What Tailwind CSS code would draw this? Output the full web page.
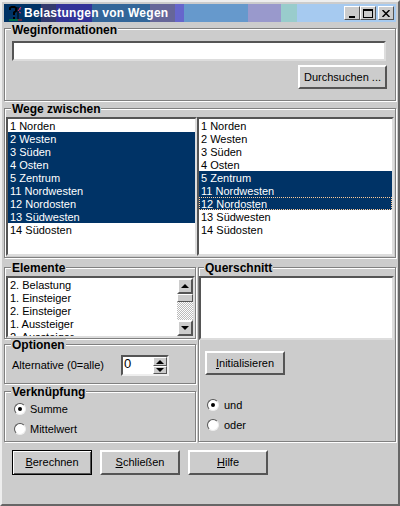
<!DOCTYPE html>
<html lang="de">
<head>
  <meta charset="UTF-8">
  <title>Belastungen von Wegen</title>
  <script src="https://cdn.jsdelivr.net/npm/@tailwindcss/browser@4"></script>
</head>
<body class="bg-[#cccccc] font-['Liberation_Sans',sans-serif] text-[11px] text-black">
  <div class="w-[400px] h-[506px] overflow-hidden bg-[#cccccc] border-2 border-t-[#eeeeee] border-l-[#eeeeee] border-r-[#666666] border-b-[#666666] p-[2px]">

    <!-- Title bar -->
    <div class="relative flex h-[18px]">
      <div class="w-[37px] bg-[#003366]"></div>
      <div class="w-[15px] bg-[#333a6e]"></div>
      <div class="w-[36px] bg-[#333399]"></div>
      <div class="w-[58px] bg-[#336699]"></div>
      <div class="w-[25px] bg-[#666699]"></div>
      <div class="w-[9px] bg-[#6666cc]"></div>
      <div class="w-[64px] bg-[#6699cc]"></div>
      <div class="w-[33px] bg-[#9999cc]"></div>
      <div class="w-[16px] bg-[#99cccc]"></div>
      <div class="flex-1 bg-[#a6caf0]"></div>
      <div class="absolute inset-0 flex items-center">
        <svg class="ml-[3px] w-[16px] h-[16px]" viewBox="0 0 16 16" fill="none">
          <path d="M3 5V3L4.5 2H7.5L9 3V6L7 7.5V10" stroke="#000" stroke-width="2"/>
          <path d="M6 12h2v2H6z" fill="#000"/>
          <path d="M11 2v12" stroke="#000"/>
          <path d="M11 6l3-4M12 4l2 0M12 7l2 1" stroke="#cc3366"/>
          <path d="M2 15h9" stroke="#00aa33"/>
          <path d="M11 15h4" stroke="#cc2222"/>
        </svg>
        <span class="ml-[1px] font-bold text-[12px] tracking-[0.25px] text-white whitespace-nowrap">Belastungen von Wegen</span>
        <div class="ml-auto flex mr-[2px]">
          <div class="w-[16px] h-[14px] bg-[#cccccc] border border-t-white border-l-white border-r-[#555555] border-b-[#555555] flex items-end justify-center pb-[1px]">
            <div class="w-[6px] h-[2px] bg-black"></div>
          </div>
          <div class="w-[16px] h-[14px] bg-[#cccccc] border border-t-white border-l-white border-r-[#555555] border-b-[#555555] flex items-center justify-center">
            <div class="w-[10px] h-[9px] border border-black border-t-2"></div>
          </div>
          <div class="ml-[2px] w-[16px] h-[14px] bg-[#cccccc] border border-t-white border-l-white border-r-[#555555] border-b-[#555555] flex items-center justify-center">
            <svg class="w-[8px] h-[7px]" viewBox="0 0 8 7"><path d="M0.5 0L7.5 7M7.5 0L0.5 7" stroke="#000" stroke-width="1.5"/></svg>
          </div>
        </div>
      </div>
    </div>

    <!-- Weginformationen -->
    <div class="relative mt-[6px] h-[73px] border border-[#808080] shadow-[inset_1px_1px_0_#fff,1px_1px_0_#fff]">
      <span class="absolute -top-[5px] left-[6px] bg-[#cccccc] px-[1px] leading-[13px] font-bold text-[12px]">Weginformationen</span>
      <div class="ml-[7px] mt-[12px] w-[374px] h-[20px] bg-white border-2 border-t-[#555555] border-l-[#555555] border-r-[#dddddd] border-b-[#dddddd]"></div>
      <div class="flex justify-end mr-[8px] mt-[4px]">
        <button class="w-[89px] h-[24px] bg-[#cccccc] border-2 border-t-white border-l-white border-r-[#555555] border-b-[#555555]">Durchsuchen ...</button>
      </div>
    </div>

    <!-- Wege zwischen -->
    <div class="relative mt-[7px] h-[150px] border border-[#808080] shadow-[inset_1px_1px_0_#fff,1px_1px_0_#fff]">
      <span class="absolute -top-[6px] left-[6px] bg-[#cccccc] px-[1px] leading-[13px] font-bold text-[12px]">Wege zwischen</span>
      <div class="flex ml-[1px] mt-[8px]">
        <ul class="w-[191px] h-[139px] bg-white border-2 border-t-[#555555] border-l-[#555555] border-r-[#dddddd] border-b-[#dddddd] leading-[14px]">
          <li class="pl-[2px] h-[13px]">1 Norden</li>
          <li class="pl-[2px] h-[13px] bg-[#003366] text-white">2 Westen</li>
          <li class="pl-[2px] h-[13px] bg-[#003366] text-white">3 Süden</li>
          <li class="pl-[2px] h-[13px] bg-[#003366] text-white">4 Osten</li>
          <li class="pl-[2px] h-[13px] bg-[#003366] text-white">5 Zentrum</li>
          <li class="pl-[2px] h-[13px] bg-[#003366] text-white">11 Nordwesten</li>
          <li class="pl-[2px] h-[13px] bg-[#003366] text-white">12 Nordosten</li>
          <li class="pl-[2px] h-[13px] bg-[#003366] text-white">13 Südwesten</li>
          <li class="pl-[2px] h-[13px]">14 Südosten</li>
        </ul>
        <ul class="w-[197px] h-[139px] bg-white border-2 border-t-[#555555] border-l-[#555555] border-r-[#dddddd] border-b-[#dddddd] leading-[14px]">
          <li class="pl-[2px] h-[13px]">1 Norden</li>
          <li class="pl-[2px] h-[13px]">2 Westen</li>
          <li class="pl-[2px] h-[13px]">3 Süden</li>
          <li class="pl-[2px] h-[13px]">4 Osten</li>
          <li class="pl-[2px] h-[13px] bg-[#003366] text-white">5 Zentrum</li>
          <li class="pl-[2px] h-[13px] bg-[#003366] text-white">11 Nordwesten</li>
          <li class="pl-[1px] h-[13px] leading-[12px] bg-[#003366] text-white border border-dotted border-[#ffcc99]">12 Nordosten</li>
          <li class="pl-[2px] h-[13px]">13 Südwesten</li>
          <li class="pl-[2px] h-[13px]">14 Südosten</li>
        </ul>
      </div>
    </div>

    <!-- Lower groups -->
    <div class="flex gap-[2px] mt-[9px]">
      <div class="w-[192px]">
        <div class="relative h-[72px] border border-[#808080] shadow-[inset_1px_1px_0_#fff,1px_1px_0_#fff]">
          <span class="absolute -top-[6px] left-[6px] bg-[#cccccc] px-[1px] leading-[13px] font-bold text-[12px]">Elemente</span>
          <div class="flex ml-[1px] mt-[8px] w-[189px] h-[62px] bg-white border-2 border-t-[#555555] border-l-[#555555] border-r-[#dddddd] border-b-[#dddddd] overflow-hidden">
            <ul class="flex-1 pl-[2px] leading-[14px]">
              <li class="h-[13px]">2. Belastung</li>
              <li class="h-[13px]">1. Einsteiger</li>
              <li class="h-[13px]">2. Einsteiger</li>
              <li class="h-[13px]">1. Aussteiger</li>
              <li class="h-[13px]">2. Aussteiger</li>
            </ul>
            <div class="w-[16px] flex flex-col">
              <div class="h-[16px] bg-[#cccccc] border-2 border-t-white border-l-white border-r-[#555555] border-b-[#555555] flex items-center justify-center">
                <div class="border-x-[4px] border-x-transparent border-b-[4px] border-b-black"></div>
              </div>
              <div class="h-[8px] bg-[#cccccc] border border-t-white border-l-white border-r-[#555555] border-b-[#555555]"></div>
              <div class="flex-1 bg-[repeating-conic-gradient(#ffffff_0_25%,#bbbbbb_0_50%)] bg-[length:2px_2px]"></div>
              <div class="h-[16px] bg-[#cccccc] border-2 border-t-white border-l-white border-r-[#555555] border-b-[#555555] flex items-center justify-center">
                <div class="border-x-[4px] border-x-transparent border-t-[4px] border-t-black"></div>
              </div>
            </div>
          </div>
        </div>

        <div class="relative mt-[5px] h-[40px] border border-[#808080] shadow-[inset_1px_1px_0_#fff,1px_1px_0_#fff]">
          <span class="absolute -top-[6px] left-[6px] bg-[#cccccc] px-[1px] leading-[13px] font-bold text-[12px]">Optionen</span>
          <div class="flex items-center pl-[7px] pt-[10px]">
            <span class="w-[109px]">Alternative (0=alle)</span>
            <div class="flex w-[48px] h-[21px] bg-white border-2 border-t-[#555555] border-l-[#555555] border-r-[#eeeeee] border-b-[#eeeeee]">
              <span class="flex-1 pl-[1px] leading-[14px] text-[13px]">0</span>
              <div class="w-[14px] flex flex-col">
                <div class="h-[9px] bg-[#cccccc] border border-t-white border-l-white border-r-[#555555] border-b-[#555555] flex items-center justify-center">
                  <div class="border-x-[4px] border-x-transparent border-b-[4px] border-b-black"></div>
                </div>
                <div class="h-[8px] bg-[#cccccc] border border-t-white border-l-white border-r-[#555555] border-b-[#555555] flex items-center justify-center">
                  <div class="border-x-[4px] border-x-transparent border-t-[4px] border-t-black"></div>
                </div>
              </div>
            </div>
          </div>
        </div>

        <div class="relative mt-[7px] h-[51px] border border-[#808080] shadow-[inset_1px_1px_0_#fff,1px_1px_0_#fff]">
          <span class="absolute -top-[6px] left-[6px] bg-[#cccccc] px-[1px] leading-[13px] font-bold text-[12px]">Verknüpfung</span>
          <div class="pl-[9px] pt-[11px] flex flex-col gap-[8px]">
            <div class="flex items-center gap-[4px] h-[12px]">
              <div class="w-[12px] h-[12px] rounded-full bg-white border border-t-[#555555] border-l-[#555555] border-r-[#eeeeee] border-b-[#eeeeee] flex items-center justify-center"><div class="w-[4px] h-[4px] rounded-full bg-black"></div></div>
              <span>Summe</span>
            </div>
            <div class="flex items-center gap-[4px] h-[12px]">
              <div class="w-[12px] h-[12px] rounded-full bg-white border border-t-[#555555] border-l-[#555555] border-r-[#eeeeee] border-b-[#eeeeee]"></div>
              <span>Mittelwert</span>
            </div>
          </div>
        </div>
      </div>

      <div class="relative w-[198px] h-[175px] border border-[#808080] shadow-[inset_1px_1px_0_#fff,1px_1px_0_#fff]">
        <span class="absolute -top-[6px] left-[5px] bg-[#cccccc] px-[1px] leading-[13px] font-bold text-[12px]">Querschnitt</span>
        <div class="mt-[8px] w-[195px] h-[64px] bg-white border-2 border-t-[#555555] border-l-[#555555] border-r-[#dddddd] border-b-[#dddddd]"></div>
        <button class="block ml-[6px] mt-[11px] w-[80px] h-[24px] bg-[#cccccc] border-2 border-t-white border-l-white border-r-[#555555] border-b-[#555555]"><u>I</u>nitialisieren</button>
        <div class="pl-[8px] pt-[24px] flex flex-col gap-[8px]">
          <div class="flex items-center gap-[5px] h-[12px]">
            <div class="w-[12px] h-[12px] rounded-full bg-white border border-t-[#555555] border-l-[#555555] border-r-[#eeeeee] border-b-[#eeeeee] flex items-center justify-center"><div class="w-[4px] h-[4px] rounded-full bg-black"></div></div>
            <span>und</span>
          </div>
          <div class="flex items-center gap-[5px] h-[12px]">
            <div class="w-[12px] h-[12px] rounded-full bg-white border border-t-[#555555] border-l-[#555555] border-r-[#eeeeee] border-b-[#eeeeee]"></div>
            <span>oder</span>
          </div>
        </div>
      </div>
    </div>

    <!-- Buttons -->
    <div class="flex gap-[8px] pl-[8px] mt-[8px]">
      <button class="w-[80px] h-[25px] bg-[#cccccc] border border-black shadow-[inset_1px_1px_0_#fff,inset_-1px_-1px_0_#555555]"><u>B</u>erechnen</button>
      <button class="w-[80px] h-[25px] bg-[#cccccc] border-2 border-t-white border-l-white border-r-[#555555] border-b-[#555555]"><u>S</u>chließen</button>
      <button class="w-[80px] h-[25px] bg-[#cccccc] border-2 border-t-white border-l-white border-r-[#555555] border-b-[#555555]"><u>H</u>ilfe</button>
    </div>
  </div>
</body>
</html>
